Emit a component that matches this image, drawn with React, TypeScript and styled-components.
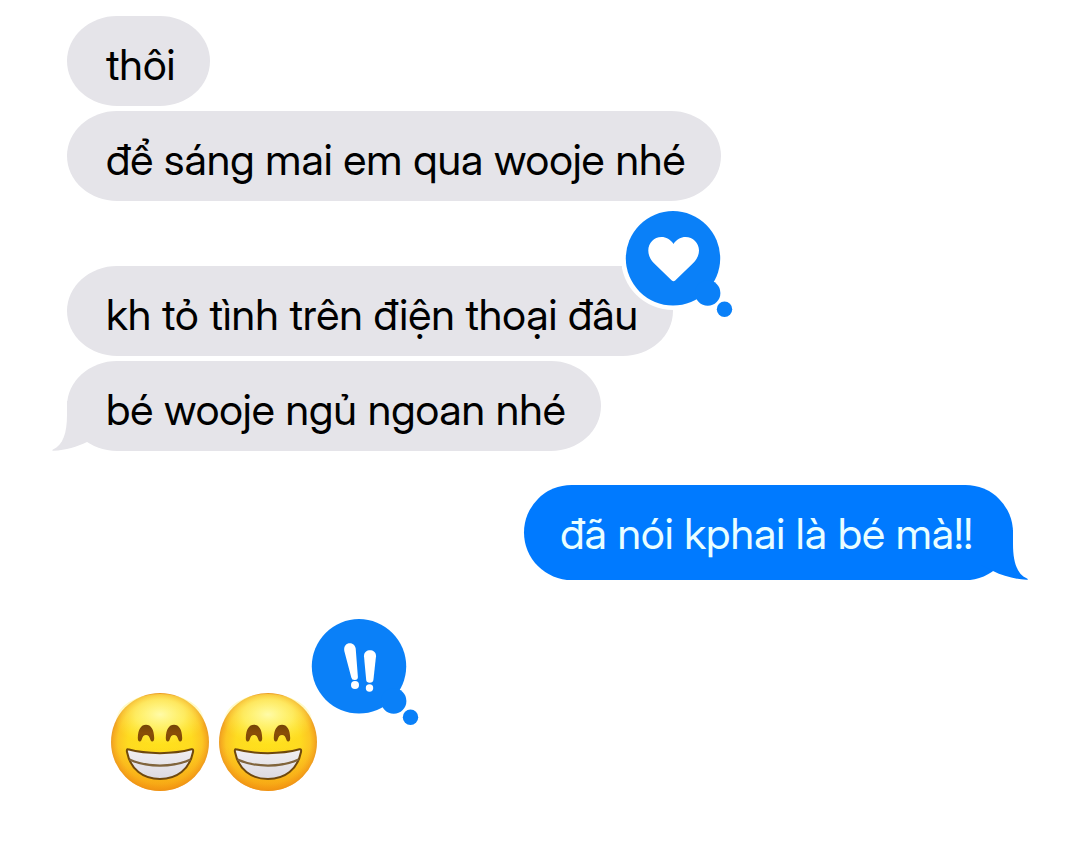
import React from "react";
import styled, { createGlobalStyle } from "styled-components";

const GlobalStyle = createGlobalStyle`
  * { box-sizing: border-box; }
  body {
    margin: 0;
    background: #ffffff;
    font-family: "Inter Display", Inter, Roboto, "Liberation Sans", sans-serif;
  }
`;

const INCOMING = "#e5e4e9";
const OUTGOING = "#007aff";
const REACTION = "#0a80f8";

const Conversation = styled.main`
  min-height: 100vh;
  padding: 16px 67px 64px;
`;

const Thread = styled.ul`
  display: flex;
  flex-direction: column;
  list-style: none;
  margin: 0;
  padding: 0;
`;

const Row = styled.li<{ $gap?: number; $mine?: boolean }>`
  display: flex;
  justify-content: ${(p) => (p.$mine ? "flex-end" : "flex-start")};
  margin-top: ${(p) => p.$gap ?? 0}px;
`;

const Bubble = styled.div<{ $mine?: boolean }>`
  position: relative;
  isolation: isolate;
  min-height: ${(p) => (p.$mine ? 95 : 90)}px;
  padding: ${(p) => (p.$mine ? "22px 40px 21px 36px" : "22px 35px 16px 39px")};
  border-radius: ${(p) => (p.$mine ? "48px" : "50px / 45px")};
  background: ${(p) => (p.$mine ? OUTGOING : INCOMING)};
  color: ${(p) => (p.$mine ? "#e9feff" : "#000000")};
  font-size: 43px;
  line-height: 52px;
`;

const TailShape = styled.svg<{ $mine?: boolean }>`
  position: absolute;
  z-index: -1;
  bottom: 0;
  ${(p) => (p.$mine ? "right: -16px;" : "left: -16px;")}
  transform: ${(p) => (p.$mine ? "scaleX(-1)" : "none")};
`;

const Badge = styled.svg<{ $place: "bubble" | "emoji" }>`
  position: absolute;
  top: ${(p) => (p.$place === "bubble" ? -60 : -78)}px;
  right: ${(p) => (p.$place === "bubble" ? -61 : -102)}px;
`;

const EmojiMessage = styled.div`
  position: relative;
  display: flex;
  gap: 8px;
  margin-left: 43px;
`;

function Tail({ mine }: { mine?: boolean }) {
  return (
    <TailShape $mine={mine} width="60" height="50" viewBox="0 0 60 50" aria-hidden="true">
      <path
        d="M16 0 V14 C16 32 12 44 2 48.6 C0.6 49.3 1 49.9 2.5 49.8 C15 49 26 46 36 41 L50 34 V0 Z"
        fill={mine ? OUTGOING : INCOMING}
      />
    </TailShape>
  );
}

function Reaction({ kind, place }: { kind: "heart" | "emphasis"; place: "bubble" | "emoji" }) {
  return (
    <Badge
      $place={place}
      width="112"
      height="112"
      viewBox="0 0 112 112"
      role="img"
      aria-label={kind === "heart" ? "Loved" : "Emphasized"}
    >
      {place === "bubble" && <circle cx="51" cy="52" r="52" fill="#ffffff" />}
      <g fill={REACTION}>
        <circle cx="51" cy="52.3" r="47.2" />
        <circle cx="85.7" cy="87" r="12.7" />
        <circle cx="102.5" cy="103.2" r="7.7" />
      </g>
      {kind === "heart" ? (
        <path
          fill="#ffffff"
          d="M51.5 38 C48.5 33.2 44 31 39.5 31 C32 31 26.3 37 26.3 44.5 C26.3 49.5 28.5 53.7 32 57.2 L49.8 74.6 Q51.5 76 53.2 74.6 L71 57.2 C74.5 53.7 77 49.5 77 44.5 C77 37 71 31 63.5 31 C59 31 54.5 33.2 51.5 38 Z"
        />
      ) : (
        <g fill="#ffffff">
          <path d="M36.3 37 C34.8 27.5 46.5 27 47.7 34.5 L49.9 63 Q49.9 66 47 66 Q43.8 66.2 43.3 63.5 Z" />
          <circle cx="47" cy="71" r="4" />
          <path d="M56 42.2 C55.8 34.4 68.2 34.4 68 42.2 L65.4 66 Q65 68.7 61.7 68.7 Q58.5 68.7 58.2 66 Z" />
          <circle cx="61.5" cy="74" r="3.7" />
        </g>
      )}
    </Badge>
  );
}

function GrinEmoji({ id }: { id: string }) {
  const face = `${id}-face`;
  const shine = `${id}-shine`;
  const shade = `${id}-shade`;
  const eye = `${id}-eye`;
  const teeth = `${id}-teeth`;
  return (
    <svg width="100" height="100" viewBox="0 0 100 100" role="img" aria-label="Beaming face with smiling eyes">
      <defs>
        <radialGradient id={face} cx="0.5" cy="0.5" r="0.5">
          <stop offset="0" stopColor="#ffe11c" />
          <stop offset="0.65" stopColor="#fedb20" />
          <stop offset="0.86" stopColor="#fcc623" />
          <stop offset="0.95" stopColor="#f6ad20" />
          <stop offset="1" stopColor="#eb9c24" />
        </radialGradient>
        <linearGradient id={shade} x1="0" y1="0" x2="0" y2="1">
          <stop offset="0.55" stopColor="#f79a0c" stopOpacity="0" />
          <stop offset="1" stopColor="#f28a08" stopOpacity="0.6" />
        </linearGradient>
        <radialGradient id={shine} cx="0.5" cy="0.38" r="0.56">
          <stop offset="0" stopColor="#fffba8" stopOpacity="1" />
          <stop offset="0.5" stopColor="#fff67a" stopOpacity="0.7" />
          <stop offset="1" stopColor="#ffee40" stopOpacity="0" />
        </radialGradient>
        <linearGradient id={eye} x1="0" y1="0" x2="0" y2="1">
          <stop offset="0" stopColor="#744406" />
          <stop offset="0.5" stopColor="#8a4d08" />
          <stop offset="1" stopColor="#7a4a06" />
        </linearGradient>
        <linearGradient id={teeth} x1="0" y1="0" x2="0" y2="1">
          <stop offset="0" stopColor="#f1eff2" />
          <stop offset="1" stopColor="#dcd9e0" />
        </linearGradient>
      </defs>
      <circle cx="50" cy="50" r="49" fill={`url(#${face})`} />
      <circle cx="50" cy="50" r="49" fill={`url(#${shade})`} />
      <ellipse cx="50" cy="29" rx="44" ry="27" fill={`url(#${shine})`} />
      <g fill={`url(#${eye})`}>
        <path d="M27.8 46 C28 37.5 31 32.8 36 32.8 C41 32.8 44 37.5 44.2 46 C44.3 50.3 41.3 50.6 40.3 47.5 C39.3 44.2 38.3 43 36 43 C33.7 43 32.7 44.2 31.7 47.5 C30.7 50.6 27.7 50.3 27.8 46 Z" />
        <path d="M55.8 46 C56 37.5 59 32.8 64 32.8 C69 32.8 72 37.5 72.2 46 C72.3 50.3 69.3 50.6 68.3 47.5 C67.3 44.2 66.3 43 64 43 C61.7 43 60.7 44.2 59.7 47.5 C58.7 50.6 55.7 50.3 55.8 46 Z" />
      </g>
      <path
        d="M18 57.3 C37 62.4 63 62.4 81.5 57.3 C83 57 83.4 58 83 60 C79.5 77.5 67 87 50 87 C33 87 20.5 77.5 17 60 C16.6 58 17 57 18 57.3 Z"
        fill={`url(#${teeth})`}
        stroke="#6f480c"
        strokeWidth="2"
      />
      <path d="M19.5 67.5 C37 75.6 63 75.6 80.5 67.5" fill="none" stroke="#80643c" strokeWidth="2.2" />
    </svg>
  );
}

export default function App() {
  return (
    <>
      <GlobalStyle />
      <Conversation>
        <Thread>
          <Row>
            <Bubble>thôi</Bubble>
          </Row>
          <Row $gap={5}>
            <Bubble>để sáng mai em qua wooje nhé</Bubble>
          </Row>
          <Row $gap={65}>
            <Bubble>
              kh tỏ tình trên điện thoại đâu
              <Reaction kind="heart" place="bubble" />
            </Bubble>
          </Row>
          <Row $gap={5}>
            <Bubble>
              bé wooje ngủ ngoan nhé
              <Tail />
            </Bubble>
          </Row>
          <Row $gap={34} $mine>
            <Bubble $mine>
              đã nói kphai là bé mà!!
              <Tail mine />
            </Bubble>
          </Row>
          <Row $gap={112}>
            <EmojiMessage>
              <GrinEmoji id="grin-one" />
              <GrinEmoji id="grin-two" />
              <Reaction kind="emphasis" place="emoji" />
            </EmojiMessage>
          </Row>
        </Thread>
      </Conversation>
    </>
  );
}
